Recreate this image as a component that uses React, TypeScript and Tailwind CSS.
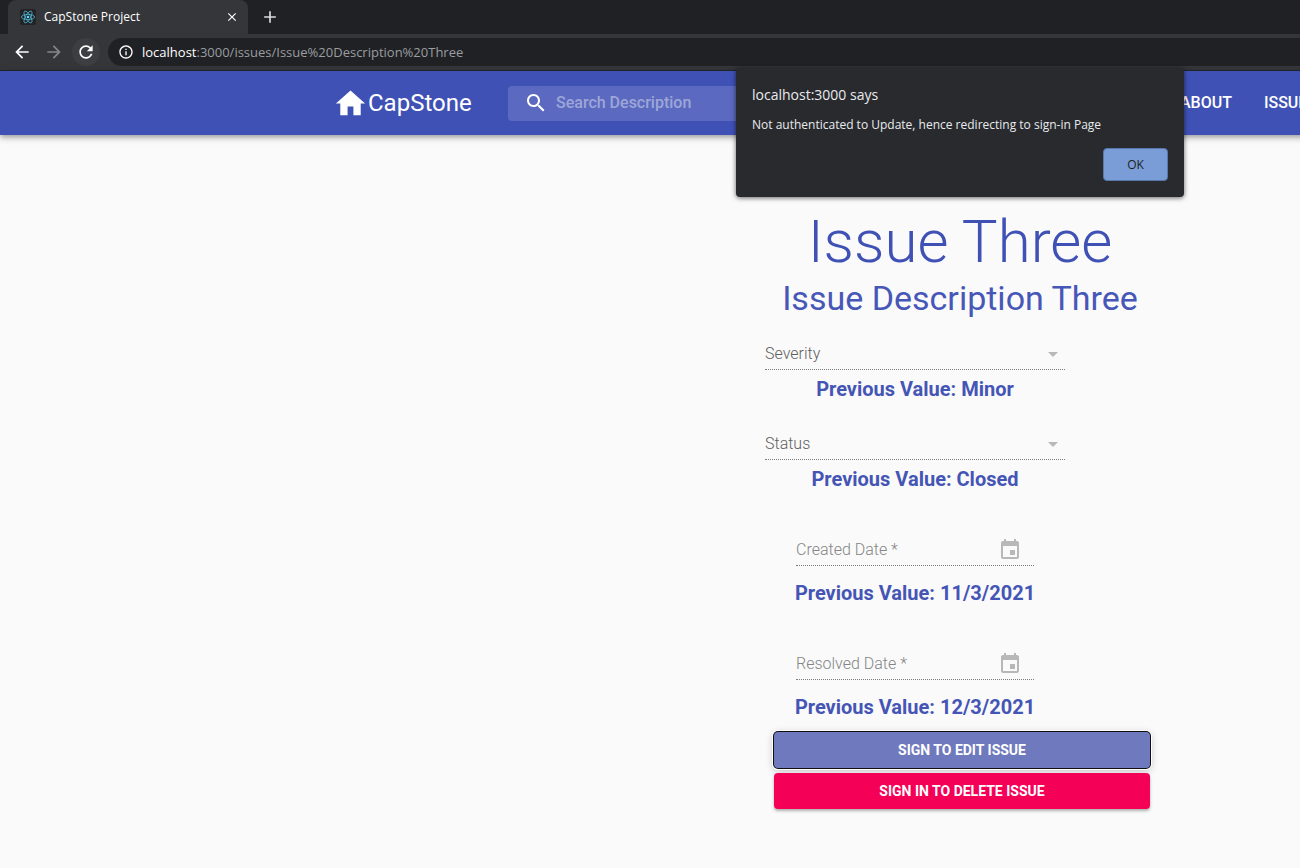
import { useId } from "react";
import type { ReactNode } from "react";

type IconProps = { path: string; className?: string };

function Icon({ path, className = "size-6" }: IconProps) {
  return (
    <svg viewBox="0 0 24 24" fill="currentColor" aria-hidden="true" className={`shrink-0 ${className}`}>
      <path d={path} />
    </svg>
  );
}

const icons = {
  home: "M10 20v-6h4v6h5v-8h3L12 3 2 12h3v8z",
  search:
    "M15.5 14h-.79l-.28-.27C15.41 12.59 16 11.11 16 9.5 16 5.91 13.09 3 9.5 3S3 5.91 3 9.5 5.91 16 9.5 16c1.61 0 3.09-.59 4.23-1.57l.27.28v.79l5 4.99L20.49 19l-4.99-5zm-6 0C7.01 14 5 11.99 5 9.5S7.01 5 9.5 5 14 7.01 14 9.5 11.99 14 9.5 14z",
  arrowDown: "M7 10l5 5 5-5z",
  calendar:
    "M17 12h-5v5h5v-5zM16 1v2H8V1H6v2H5c-1.11 0-1.99.9-1.99 2L3 19c0 1.1.89 2 2 2h14c1.1 0 2-.9 2-2V5c0-1.1-.9-2-2-2h-1V1h-2zm3 18H5V8h14v11z",
  back: "M20 11H7.83l5.59-5.59L12 4l-8 8 8 8 1.41-1.41L7.83 13H20v-2z",
  forward: "M12 4l-1.41 1.41L16.17 11H4v2h12.17l-5.58 5.59L12 20l8-8z",
  reload:
    "M17.65 6.35C16.2 4.9 14.21 4 12 4c-4.42 0-7.99 3.58-7.99 8s3.57 8 7.99 8c3.73 0 6.84-2.55 7.73-6h-2.08c-.82 2.33-3.04 4-5.65 4-3.31 0-6-2.69-6-6s2.69-6 6-6c1.66 0 3.14.69 4.22 1.78L13 11h7V4l-2.35 2.35z",
  info: "M11 7h2v2h-2zm0 4h2v6h-2zm1-9C6.48 2 2 6.48 2 12s4.48 10 10 10 10-4.48 10-10S17.52 2 12 2zm0 18c-4.41 0-8-3.59-8-8s3.59-8 8-8 8 3.59 8 8-3.59 8-8 8z",
  close:
    "M19 6.41L17.59 5 12 10.59 6.41 5 5 6.41 10.59 12 5 17.59 6.41 19 12 13.41 17.59 19 19 17.59 13.41 12z",
  plus: "M19 13h-6v6h-2v-6H5v-2h6V5h2v6h6v2z",
};

function ReactLogo() {
  return (
    <svg viewBox="0 0 16 16" className="size-4 shrink-0" aria-hidden="true">
      <rect width="16" height="16" rx="2" fill="#222327" />
      <g fill="none" stroke="#4fb3cb" strokeWidth="0.8">
        <ellipse cx="8" cy="8" rx="6.6" ry="2.6" />
        <ellipse cx="8" cy="8" rx="6.6" ry="2.6" transform="rotate(60 8 8)" />
        <ellipse cx="8" cy="8" rx="6.6" ry="2.6" transform="rotate(120 8 8)" />
      </g>
      <circle cx="8" cy="8" r="1.3" fill="#61dafb" />
    </svg>
  );
}

function BrowserChrome() {
  return (
    <div className="border-b border-[#252629] bg-[#202124] font-['Open_Sans',sans-serif]">
      <div className="flex h-[34px] items-stretch pl-2">
        <div className="flex w-60 items-center gap-2 rounded-t-lg bg-[#35363a] pr-[9px] pl-3">
          <ReactLogo />
          <span className="flex-1 text-xs text-white">CapStone Project</span>
          <button type="button" aria-label="Close tab" className="text-white">
            <Icon path={icons.close} className="size-3.5" />
          </button>
        </div>
        <button type="button" aria-label="New tab" className="ml-3 text-[#dadce0]">
          <Icon path={icons.plus} className="size-5" />
        </button>
      </div>
      <div className="flex h-9 items-center bg-[#35363a] pl-2">
        <button type="button" aria-label="Back" className="grid size-7 place-items-center text-white">
          <Icon path={icons.back} className="size-5" />
        </button>
        <button type="button" aria-label="Forward" className="ml-1 grid size-7 place-items-center text-[#85868a]">
          <Icon path={icons.forward} className="size-5" />
        </button>
        <button type="button" aria-label="Reload" className="ml-1 grid size-7 place-items-center rounded-full bg-[#3d3e42] text-white">
          <Icon path={icons.reload} className="size-5" />
        </button>
        <div className="ml-2 flex h-7 flex-1 items-center gap-2 rounded-l-full bg-[#202124] pl-2.5 text-[13px] text-[#9a9da1]">
          <Icon path={icons.info} className="size-4 text-white" />
          <span className="pt-px">
            <span className="text-white">localhost</span>:3000/issues/Issue%20Description%20Three
          </span>
        </div>
      </div>
    </div>
  );
}

function Header() {
  return (
    <header className="bg-[#3f51b5] text-white shadow-[0_2px_4px_-1px_rgba(0,0,0,0.2),0_4px_5px_rgba(0,0,0,0.14),0_1px_10px_rgba(0,0,0,0.12)]">
      <div className="mx-auto flex h-16 max-w-[1280px] items-center px-[13px]">
        <a href="#home" className="flex w-[175px] items-center text-2xl">
          <Icon path={icons.home} className="size-[35px]" />
          CapStone
        </a>
        <div className="flex h-[35px] w-[640px] items-center gap-2 rounded-sm bg-white/15 pl-4">
          <Icon path={icons.search} />
          <input
            type="search"
            aria-label="Search Description"
            placeholder="Search Description"
            className="w-full bg-transparent text-base font-medium outline-none placeholder:text-[#9ea6d8]"
          />
        </div>
        <nav className="ml-8 flex gap-8 text-base font-medium">
          <a href="#about">ABOUT</a>
          <a href="#issues">ISSUES</a>
        </nav>
      </div>
    </header>
  );
}

function PreviousValue({ children }: { children: ReactNode }) {
  return <p className="text-center text-xl leading-[38px] font-bold text-[#4555b5]">Previous Value: {children}</p>;
}

function SelectField({ label, previous }: { label: string; previous: string }) {
  const id = useId();
  return (
    <div className="mt-5">
      <div className="grid h-8 items-center border-b border-dotted border-[#7c7c7c]">
        <label htmlFor={id} className="text-base font-light text-[#5f5f5f] [grid-area:1/1]">
          {label}
        </label>
        <select id={id} disabled defaultValue="" className="w-full appearance-none bg-transparent [grid-area:1/1]">
          <option value="" aria-label={label} />
        </select>
        <Icon path={icons.arrowDown} className="size-6 justify-self-end text-[#b8b8b8] [grid-area:1/1]" />
      </div>
      <PreviousValue>{previous}</PreviousValue>
    </div>
  );
}

function DateField({ label, previous }: { label: string; previous: string }) {
  const id = useId();
  return (
    <div className="mt-9">
      <div className="mx-auto mb-2 grid h-8 w-[238px] items-center border-b border-dotted border-[#7c7c7c]">
        <label htmlFor={id} className="text-base font-light text-[#858585] [grid-area:1/1]">
          {label} *
        </label>
        <input id={id} type="text" disabled className="w-full bg-transparent [grid-area:1/1]" />
        <button
          type="button"
          aria-label={`Choose ${label}`}
          disabled
          className="mr-3 justify-self-end text-[#b8b8b8] [grid-area:1/1]"
        >
          <Icon path={icons.calendar} />
        </button>
      </div>
      <PreviousValue>{previous}</PreviousValue>
    </div>
  );
}

function AlertDialog() {
  return (
    <div
      role="alertdialog"
      aria-labelledby="alert-title"
      aria-describedby="alert-text"
      className="absolute top-[68px] left-1/2 flex w-[448px] -translate-x-1/2 flex-col rounded-sm bg-[#292a2d] p-4 font-['Open_Sans',sans-serif] text-[#e8eaed] shadow-[0_1px_5px_rgba(0,0,0,0.6)]"
    >
      <h2 id="alert-title" className="text-sm leading-[22px]">
        localhost:3000 says
      </h2>
      <p id="alert-text" className="mt-2 text-xs leading-[22px]">
        Not authenticated to Update, hence redirecting to sign-in Page
      </p>
      <button
        type="button"
        className="mt-3 h-[33px] w-[65px] self-end rounded-sm border border-[#5778ad] bg-[#7a9dd8] text-xs text-[#202124]"
      >
        OK
      </button>
    </div>
  );
}

export default function App() {
  return (
    <div className="min-h-screen overflow-hidden bg-[#fafafa] font-[Roboto,sans-serif]">
      <div className="relative min-w-[1920px]">
        <BrowserChrome />
        <Header />
        <main className="mx-auto flex w-[390px] flex-col pt-[71px] pb-14">
          <h1 className="text-center text-6xl leading-[72px] font-light text-[#3f51b5]">Issue Three</h1>
          <p className="text-center text-[34px] leading-10 text-[#4757b8]">Issue Description Three</p>
          <form className="flex flex-col">
            <div className="w-[300px]">
              <SelectField label="Severity" previous="Minor" />
              <SelectField label="Status" previous="Closed" />
              <DateField label="Created Date" previous="11/3/2021" />
              <DateField label="Resolved Date" previous="12/3/2021" />
            </div>
            <div className="mt-1.5 mr-[5px] flex w-[376px] flex-col gap-[5px] self-end text-sm font-bold text-white">
              <button
                type="button"
                className="h-9 rounded-sm bg-[#6f79bd] shadow-[0_0_0_1px_#101010,0_0_0_2px_#fff,0_2px_8px_rgba(0,0,0,0.3)]"
              >
                SIGN TO EDIT ISSUE
              </button>
              <button type="button" className="h-9 rounded-sm bg-[#f50057] shadow-[0_2px_3px_rgba(0,0,0,0.3)]">
                SIGN IN TO DELETE ISSUE
              </button>
            </div>
          </form>
        </main>
        <AlertDialog />
      </div>
    </div>
  );
}
